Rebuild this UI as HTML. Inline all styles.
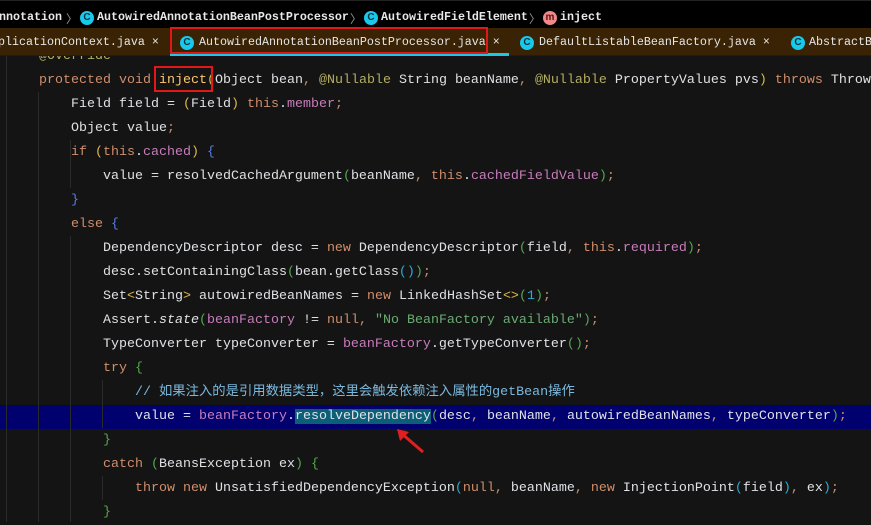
<!DOCTYPE html>
<html><head><meta charset="utf-8"><style>
*{margin:0;padding:0;box-sizing:border-box}
body{width:871px;height:522px;overflow:hidden;background:#141414;font-family:"Liberation Mono","Noto Sans CJK SC",monospace;font-size:13.33px;color:#dfe1e5;position:relative}
.bc{position:absolute;left:0;top:0;width:871px;height:28px;background:#000;border-top:1px solid #222}
.bc span{position:absolute;top:9px;white-space:pre;font-weight:bold;color:#e8e8e8;font-size:11.67px}
.ic{position:absolute;width:14px;height:14px;border-radius:50%;background:#19c9ec;color:#06323c;font:bold 10px "Liberation Sans",sans-serif;text-align:center;line-height:14px}
.tabs{position:absolute;left:0;top:28px;width:871px;height:28px;background:#3a2304;border-bottom:1px solid #2a1a04}
.tabs span{position:absolute;top:7px;white-space:pre;color:#e6e6e6;font-size:11.67px}
.code{position:absolute;left:7px;top:45px;width:864px}
.l{height:24px;line-height:24px;white-space:pre;position:relative}
.hl{margin-left:-7px;padding-left:7px}
.k{color:#cf8e6d}.a{color:#b3ae60}.f{color:#c77dbb}.s{color:#6aab73}.c{color:#7ab8de}.m{color:#ffc66d}
.g{color:#55a84f}.b{color:#5b7be0}.y{color:#e0b94a}.n{color:#2aacd8}
.guide{position:absolute;width:1px;background:#2a2a2a}
</style></head><body>
<div class="code">
<div class="l">    <span class="a">@Override</span></div>
<div class="l">    <span class="k">protected void </span><span class="m">inject</span><span class="y">(</span>Object bean<span class="k">, </span><span class="a">@Nullable</span> String beanName<span class="k">, </span><span class="a">@Nullable</span> PropertyValues pvs<span class="y">)</span> <span class="k">throws</span> Throwable</div>
<div class="l">        Field field = <span class="y">(</span>Field<span class="y">)</span> <span class="k">this</span>.<span class="f">member</span><span class="k">;</span></div>
<div class="l">        Object value<span class="k">;</span></div>
<div class="l">        <span class="k">if</span> <span class="y">(</span><span class="k">this</span>.<span class="f">cached</span><span class="y">)</span> <span class="b">{</span></div>
<div class="l">            value = resolvedCachedArgument<span class="g">(</span>beanName<span class="k">, this</span>.<span class="f">cachedFieldValue</span><span class="g">)</span><span class="k">;</span></div>
<div class="l">        <span class="b">}</span></div>
<div class="l">        <span class="k">else</span> <span class="b">{</span></div>
<div class="l">            DependencyDescriptor desc = <span class="k">new</span> DependencyDescriptor<span class="g">(</span>field<span class="k">, this</span>.<span class="f">required</span><span class="g">)</span><span class="k">;</span></div>
<div class="l">            desc.setContainingClass<span class="g">(</span>bean.getClass<span class="n">()</span><span class="g">)</span><span class="k">;</span></div>
<div class="l">            Set<span class="y">&lt;</span>String<span class="y">&gt;</span> autowiredBeanNames = <span class="k">new</span> LinkedHashSet<span class="y">&lt;&gt;</span><span class="g">(</span><span class="n">1</span><span class="g">)</span><span class="k">;</span></div>
<div class="l">            Assert.<i>state</i><span class="g">(</span><span class="f">beanFactory</span> != <span class="k">null, </span><span class="s">"No BeanFactory available"</span><span class="g">)</span><span class="k">;</span></div>
<div class="l">            TypeConverter typeConverter = <span class="f">beanFactory</span>.getTypeConverter<span class="g">()</span><span class="k">;</span></div>
<div class="l">            <span class="k">try</span> <span class="g">{</span></div>
<div class="l">                <span class="c">// 如果注入的是引用数据类型，这里会触发依赖注入属性的getBean操作</span></div>
<div class="l hl" style="background:#00006e">                value = <span class="f">beanFactory</span>.<span style="background:#0b5f78">resolveDependency</span><span class="g">(</span>desc<span class="k">, </span>beanName<span class="k">, </span>autowiredBeanNames<span class="k">, </span>typeConverter<span class="g">)</span><span class="k">;</span></div>
<div class="l">            <span class="g">}</span></div>
<div class="l">            <span class="k">catch</span> <span class="g">(</span>BeansException ex<span class="g">)</span> <span class="g">{</span></div>
<div class="l">                <span class="k">throw new</span> UnsatisfiedDependencyException<span class="n">(</span><span class="k">null, </span>beanName<span class="k">, new</span> InjectionPoint<span class="n">(</span>field<span class="n">)</span><span class="k">, </span>ex<span class="n">)</span><span class="k">;</span></div>
<div class="l">            <span class="g">}</span></div>
</div>
<div class="guide" style="left:6px;top:56px;height:466px"></div>
<div class="guide" style="left:38px;top:92px;height:430px"></div>
<div class="guide" style="left:70px;top:140px;height:48px"></div>
<div class="guide" style="left:70px;top:236px;height:286px"></div>
<div class="guide" style="left:102px;top:380px;height:48px"></div>
<div class="guide" style="left:102px;top:476px;height:24px"></div>
<svg style="position:absolute;left:395px;top:428px" width="34" height="28"><line x1="28" y1="24" x2="6" y2="5" stroke="#e02020" stroke-width="3"/><polygon points="2,1 14,4 5,13" fill="#e02020"/></svg>
<div style="position:absolute;left:154px;top:66px;width:59px;height:26px;border:2px solid #e01818"></div>
<div class="bc">
<span style="left:-1px">nnotation</span><span style="left:66px;color:#999;font-weight:normal">〉</span>
<div class="ic" style="left:80px;top:10px">C</div><span style="left:97px">AutowiredAnnotationBeanPostProcessor</span><span style="left:350px;color:#999;font-weight:normal">〉</span>
<div class="ic" style="left:364px;top:10px">C</div><span style="left:381px">AutowiredFieldElement</span><span style="left:529px;color:#999;font-weight:normal">〉</span>
<div class="ic" style="left:543px;top:10px;background:#f08a8a;color:#5a1010">m</div><span style="left:560px">inject</span>
</div>
<div class="tabs">
<span style="left:-2px">plicationContext.java ×</span>
<div class="ic" style="left:180px;top:8px">C</div><span style="left:199px">AutowiredAnnotationBeanPostProcessor.java ×</span>
<div class="ic" style="left:520px;top:8px">C</div><span style="left:539px">DefaultListableBeanFactory.java ×</span>
<div class="ic" style="left:791px;top:8px">C</div><span style="left:809px">AbstractB</span>
<div style="position:absolute;left:170px;top:25px;width:339px;height:3px;background:#1fc6e8"></div>
<div style="position:absolute;left:170px;top:-1px;width:318px;height:27px;border:2px solid #e01818"></div>
</div>
</body></html>
